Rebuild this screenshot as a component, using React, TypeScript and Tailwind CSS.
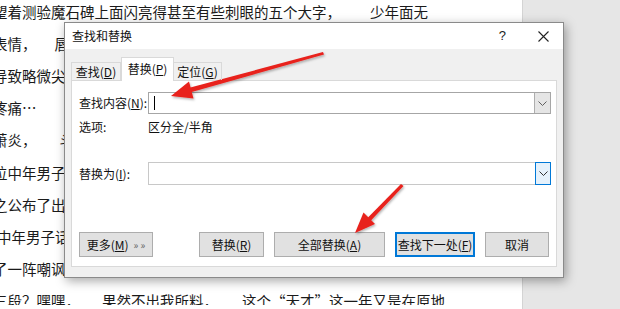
import React from "react";

const cjk = { fontFamily: '"Noto Sans CJK SC", "Noto Sans", sans-serif' };

function Chevron({ color = "#606060" }: { color?: string }) {
  return (
    <svg width="9" height="5" viewBox="0 0 9 5">
      <path d="M0.5 0.5 L4.5 4.5 L8.5 0.5" fill="none" stroke={color} strokeWidth="1" />
    </svg>
  );
}

function Btn({ children, w, focus }: { children: React.ReactNode; w: string; focus?: boolean }) {
  return (
    <div
      className={`${w} h-[25px] flex items-center justify-center bg-[#e1e1e1] text-[12px] text-[#111] ${
        focus ? "border-2 border-[#0078d7]" : "border border-[#adadad]"
      }`}
    >
      {children}
    </div>
  );
}

export default function App() {
  return (
    <div className="relative w-[620px] h-[309px] overflow-hidden bg-white" style={cjk}>
      <div className="flex h-full">
        {/* document page */}
        <div className="w-[522px] h-full overflow-hidden text-[14.5px] leading-[32.2px] text-[#1a1a1a] -mt-[4.5px] whitespace-pre">
          <div className="flex -ml-[7px]">
            <span>望着测验魔石碑上面闪亮得甚至有些刺眼的五个大字，</span>
            <span className="ml-[29px]">少年面无</span>
          </div>
          <div className="flex -ml-[7px]">
            <span>表情，</span>
            <span className="ml-[18px]">唇角有着一抹自嘲</span>
          </div>
          <div className="flex -ml-[7px]">
            <span>导致略微尖锐的指甲</span>
          </div>
          <div className="flex -ml-[7px]">
            <span>疼痛…</span>
          </div>
          <div className="flex -ml-[7px]">
            <span>萧炎，</span>
            <span className="ml-[23px]">斗之力</span>
          </div>
          <div className="flex -ml-[7px]">
            <span>位中年男子</span>
          </div>
          <div className="flex -ml-[7px]">
            <span>之公布了出来</span>
          </div>
          <div className="flex -ml-[3px]">
            <span>中年男子话刚刚脱口</span>
          </div>
          <div className="flex -ml-[7px]">
            <span>了一阵嘲讽的骚动。</span>
          </div>
          <div className="flex -ml-[7px]">
            <span>三段？嘿嘿，</span>
            <span className="ml-[22px]">果然不出我所料，</span>
            <span className="ml-[24px]">这个“天才”这一年又是在原地</span>
          </div>
        </div>
        {/* grey area */}
        <div className="flex-1 h-full bg-[#e6e6e6] border-l border-[#d4d4d4]" />
      </div>

      {/* dialog */}
      <div className="absolute left-[64px] top-[22px] w-[500px] h-[256px] bg-[#f0f0f0] border border-[#8a8a8a] shadow-[2px_3px_10px_rgba(0,0,0,0.35)] flex flex-col text-[12px] text-[#111]">
        <div className="h-[26px] bg-white flex items-center pl-[7px] pr-[14px] shrink-0">
          <span className="text-[12px]">查找和替换</span>
          <span className="ml-auto text-[13px] text-[#222]" style={{ fontFamily: '"Liberation Sans", sans-serif' }}>
            ?
          </span>
          <svg className="ml-[32px]" width="11" height="11" viewBox="0 0 11 11">
            <path d="M0.5 0.5 L10.5 10.5 M10.5 0.5 L0.5 10.5" stroke="#222" strokeWidth="1.1" />
          </svg>
        </div>
        <div className="flex flex-col px-[6px] pt-[8px] pb-[10px] flex-1">
          {/* tabs */}
          <div className="flex items-end h-[23px] relative z-10">
            <div className="w-[50px] h-[18px] border border-b-0 border-[#d9d9d9] flex items-center justify-center">
              查找(<u>D</u>)
            </div>
            <div className="w-[53px] h-[24px] -mb-[1px] bg-white border border-b-0 border-[#d9d9d9] flex items-center justify-center pb-[2px]">
              替换(<u>P</u>)
            </div>
            <div className="w-[48px] h-[18px] border border-b-0 border-l-0 border-[#d9d9d9] flex items-center justify-center">
              定位(<u>G</u>)
            </div>
          </div>
          {/* panel */}
          <div className="flex-1 bg-white border border-[#d9d9d9] flex flex-col pl-[7px] pr-[5px] pt-[11px]">
            <div className="flex items-center h-[22px]">
              <span className="w-[69px]">
                查找内容(<u>N</u>):
              </span>
              <div className="flex-1 h-[22px] border border-[#a6a6a6] flex items-center">
                <div className="ml-[5px] w-px h-[14px] bg-black" />
                <div className="ml-auto w-[16px] h-full bg-[#e5e5e5] border-l border-[#adadad] flex items-center justify-center">
                  <Chevron />
                </div>
              </div>
            </div>
            <div className="flex items-center h-[20px] mt-[3px]">
              <span className="w-[69px]">选项:</span>
              <span>区分全/半角</span>
            </div>
            <div className="flex items-center h-[23px] mt-[25px]">
              <span className="w-[69px]">
                替换为(<u>I</u>):
              </span>
              <div className="flex-1 h-[23px] border border-[#c8c8c8] flex items-center">
                <div className="ml-auto w-[16px] h-[23px] -mr-px bg-[#e5f1fb] border border-[#0078d7] flex items-center justify-center">
                  <Chevron color="#333" />
                </div>
              </div>
            </div>
            <div className="flex items-center mt-[47px] pr-[2px]">
              <Btn w="w-[74px]">
                <span>
                  更多(<u>M</u>)
                </span>
                <span className="ml-[5px] text-[10px] text-[#666]">» »</span>
              </Btn>
              <div className="ml-auto flex items-center gap-[10px]">
                <Btn w="w-[65px]">
                  替换(<u>R</u>)
                </Btn>
                <Btn w="w-[111px]">
                  全部替换(<u>A</u>)
                </Btn>
                <Btn w="w-[80px]" focus>
                  查找下一处(<u>F</u>)
                </Btn>
                <Btn w="w-[64px]">取消</Btn>
              </div>
            </div>
          </div>
        </div>
      </div>

      {/* red arrows overlay */}
      <svg className="absolute left-0 top-0 pointer-events-none" width="620" height="309" viewBox="0 0 620 309">
        <defs>
          <filter id="sh" x="-20%" y="-20%" width="140%" height="140%">
            <feDropShadow dx="1" dy="1.5" stdDeviation="1" floodColor="#000" floodOpacity="0.3" />
          </filter>
        </defs>
        <g filter="url(#sh)" fill="#e8211c">
          <polygon points="323,52 324,54.5 190,92.5 188.5,88" />
          <polygon points="171,96 189,81.5 193.5,98.5" />
          <polygon points="401,184 403.5,186 370,221.5 367,218.5" />
          <polygon points="355,233 363.5,212.5 375,224" />
        </g>
      </svg>
    </div>
  );
}
